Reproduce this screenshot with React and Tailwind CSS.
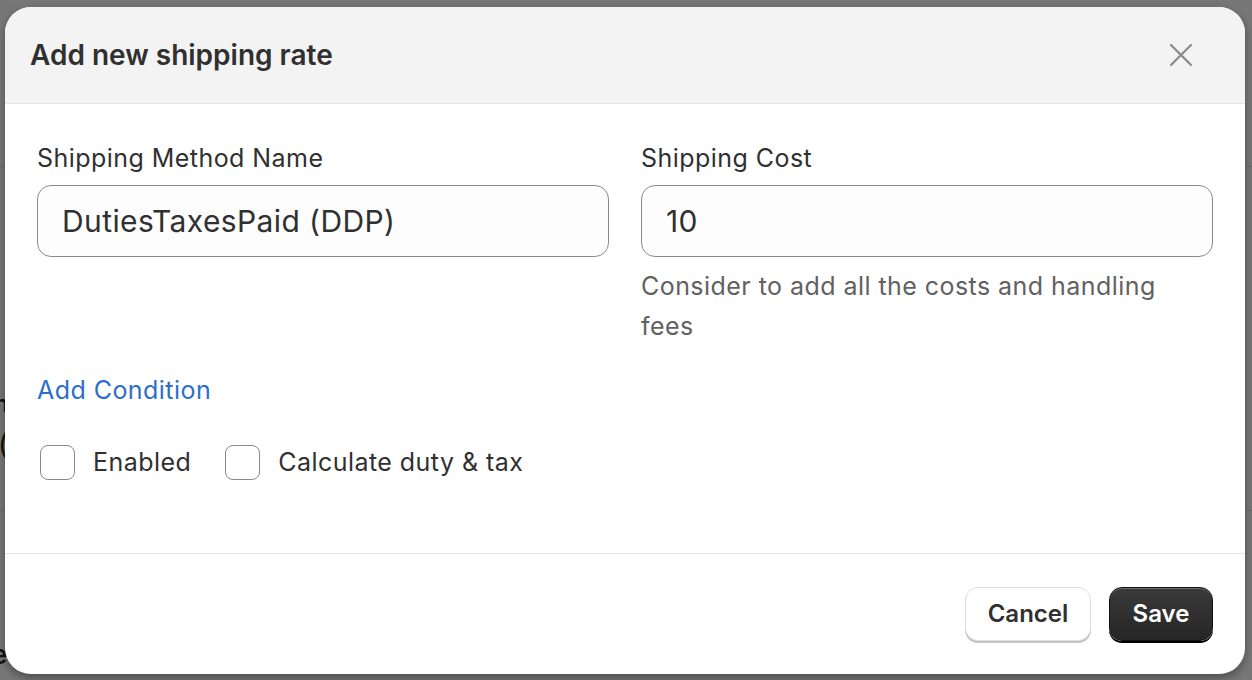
import React from "react";

export default function App() {
  return (
    <div
      className="relative w-[1252px] h-[680px] overflow-hidden bg-[#777777]"
      style={{ fontFamily: "Inter, 'Noto Sans', sans-serif" }}
    >
      {/* underlying page hints */}
      <div className="absolute left-0 top-[166px] w-full h-px bg-[#6a6a6a]" />
      <div className="absolute left-0 top-[510px] w-full h-px bg-[#6a6a6a]" />
      <div className="absolute left-[-6px] top-[392px] text-[24px] text-[#111] font-semibold leading-none">n</div>
      <div className="absolute left-[-2px] top-[430px] text-[28px] text-[#111] leading-none">(</div>
      <div className="absolute left-[-8px] top-[642px] text-[26px] text-[#111] font-semibold leading-none">e</div>

      {/* modal */}
      <div className="absolute left-[5px] top-[7px] w-[1240px] h-[667px] bg-white rounded-[26px] overflow-hidden shadow-[0_4px_10px_rgba(0,0,0,0.35)] flex flex-col text-[#303030]">
        {/* header */}
        <div className="h-[97px] shrink-0 bg-[#f3f3f3] border-b border-[#e3e3e3] flex items-center justify-between pl-[25px] pr-[52px]">
          <h2 className="text-[28px] font-semibold text-[#303030]">Add new shipping rate</h2>
          <svg width="24" height="24" viewBox="0 0 24 24" fill="none" stroke="#8a8a8a" strokeWidth="2.2" strokeLinecap="round">
            <path d="M2 2 L22 22 M22 2 L2 22" />
          </svg>
        </div>

        {/* body */}
        <div className="flex-1 px-[32px] pt-[39px] border-b border-[#e3e3e3]">
          <div className="grid grid-cols-2 gap-[32px]">
            <div className="flex flex-col">
              <label className="text-[25px] leading-[30px] tracking-[0.45px] text-[#303030]">Shipping Method Name</label>
              <div className="mt-[12px] h-[72px] rounded-[14px] border border-[#8a8a8a] bg-[#fdfdfd] flex items-center px-[24px] text-[30px] tracking-[0.4px] text-[#303030]">
                DutiesTaxesPaid (DDP)
              </div>
            </div>
            <div className="flex flex-col">
              <label className="text-[25px] leading-[30px] tracking-[0.45px] text-[#303030]">Shipping Cost</label>
              <div className="mt-[12px] h-[72px] rounded-[14px] border border-[#8a8a8a] bg-[#fdfdfd] flex items-center px-[24px] text-[30px] tracking-[0.4px] text-[#303030]">
                10
              </div>
              <p className="mt-[9px] text-[25px] leading-[40px] tracking-[0.45px] text-[#616161] pr-[40px]">
                Consider to add all the costs and handling fees
              </p>
            </div>
          </div>

          <div className="mt-[28px] text-[25px] leading-[32px] tracking-[0.45px] text-[#2c6ecb]">Add Condition</div>

          <div className="mt-[38px] flex items-center gap-[34px]">
            <div className="flex items-center gap-[18px] pl-[3px]">
              <span className="w-[35px] h-[35px] rounded-[8px] border-[1.5px] border-[#8a8a8a] bg-white" />
              <span className="text-[25px] leading-[36px] tracking-[0.45px]">Enabled</span>
            </div>
            <div className="flex items-center gap-[18px]">
              <span className="w-[35px] h-[35px] rounded-[8px] border-[1.5px] border-[#8a8a8a] bg-white" />
              <span className="text-[25px] leading-[36px] tracking-[0.45px]">Calculate duty &amp; tax</span>
            </div>
          </div>
        </div>

        {/* footer */}
        <div className="h-[120px] shrink-0 flex items-center justify-end gap-[18px] px-[32px]">
          <button className="h-[54px] w-[126px] rounded-[13px] bg-white border border-[#e0e0e0] shadow-[0_2px_0_#c4c4c4] text-[24px] font-semibold text-[#303030]">
            Cancel
          </button>
          <button className="h-[54px] w-[104px] rounded-[13px] bg-gradient-to-b from-[#3a3a3a] to-[#262626] border border-[#111] shadow-[inset_0_1px_0_rgba(255,255,255,0.25),0_2px_0_#000] text-[24px] font-semibold text-white">
            Save
          </button>
        </div>
      </div>
    </div>
  );
}
